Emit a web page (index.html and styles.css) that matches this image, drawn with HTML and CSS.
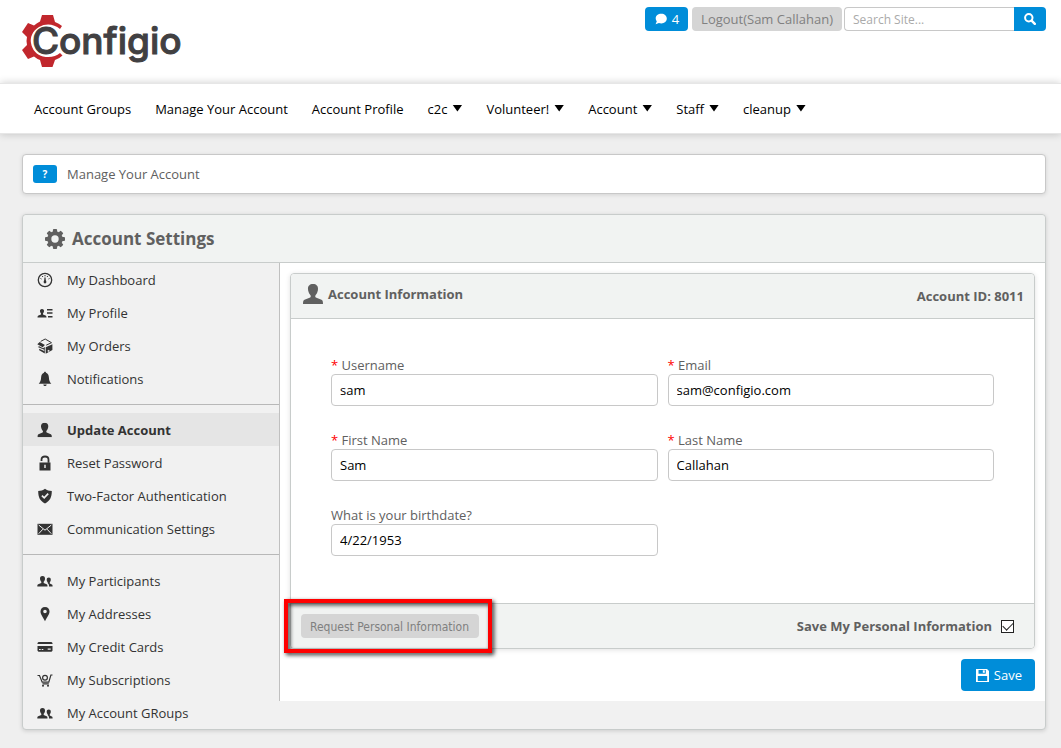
FILE: index.html
```html
<!DOCTYPE html>
<html lang="en">
<head>
<meta charset="utf-8">
<title>Configio - Manage Your Account</title>
<link rel="stylesheet" href="styles.css">
</head>
<body>
<svg class="sprite" aria-hidden="true">
  <symbol id="i-person" viewBox="0 0 20 20"><path d="M10 0C6.700 0 4.800 2 5 5c0 1 .2 2 .6 3 .5 1.700 1.400 2.700 2 3.500.3.800.2 1.500-.4 2L1.500 15.800C.4 16.300 0 17.500 0 20h20c0-2.500-.4-3.700-1.500-4.200L12.800 13.500c-.6-.5-.7-1.200-.4-2 .6-.8 1.500-1.800 2-3.500.4-1 .6-2 .6-3 .2-3-1.700-5-5-5z"/></symbol>
  <symbol id="i-people" viewBox="0 0 16 16"><path d="M5.500 3C3.600 3 2.900 4.200 3 5.700c.1 1.500.8 2.300 1.300 3v1.200L1.200 11.300C.5 11.600.3 12.200.3 13.500h10.200c0-1.300-.1-1.900-.9-2.200L6.700 9.900V8.700C7.300 8 8 7.200 8 5.700 8.100 4.200 7.400 3 5.500 3z"/><path d="M11.800 4.500c-1.300 0-2.100.8-2.100 2.200 0 1.200.5 1.900 1 2.500v.9l.3.400c.8.400 1 1.300 1 3h3.600c0-1.100-.1-1.600-.7-1.900l-2.100-1.100V9.200c.5-.6 1-1.300 1-2.500 0-1.400-.7-2.200-2-2.200z"/></symbol>
</svg>

<header class="top">
  <a class="logo" href="#" aria-label="Configio">
    <svg width="166" height="58" viewBox="20 12 166 58">
      <path fill="#c1272d" d="M42 15h11l2 7q4 1.500 7 4l-2 3C54 24 46 23 39 27 32 31 30 38 31 43c1 7 6 12 12 13.500 7 1.500 13 0 17-3.500l2.500 2.500q-3 3-7.500 4.500l-2.500 7H42l-2-7q-3-1-6-3.500l-6 2.500-6-9 5-5q-1-4 0-8l-5-5 6-9 6 2.500q3-2.500 6-4z"/>
      <text x="32" y="54" class="logo-text">C</text>
      <text x="59" y="54" class="logo-text">onfigio</text>
    </svg>
  </a>
  <div class="tools">
    <button class="btn blue chat" type="button">
      <svg width="12" height="12" viewBox="0 0 12 12" fill="#fff"><path d="M6.300.8C3 .8.700 2.800.700 5.400c0 1.200.4 2.100 1.100 2.900L.6 11.200l3.300-1.100c.7.200 1.500.3 2.400.3 3.200 0 5.500-2.100 5.500-4.800S9.500.8 6.300.8z"/></svg>4</button>
    <button class="btn grey" type="button">Logout(Sam Callahan)</button>
    <form class="search">
      <input type="text" aria-label="Search site" placeholder="Search Site...">
      <button class="blue" type="button" aria-label="Search">
        <svg width="12" height="12" viewBox="0 0 12 12" fill="none" stroke="#fff"><circle cx="4.800" cy="4.800" r="3.700" stroke-width="2"/><path d="M7.600 7.600l3.200 3.200" stroke-width="2.400" stroke-linecap="round"/></svg>
      </button>
    </form>
  </div>
</header>

<nav class="nav">
  <a href="#">Account Groups</a>
  <a href="#">Manage Your Account</a>
  <a href="#">Account Profile</a>
  <a href="#" class="drop">c2c</a>
  <a href="#" class="drop">Volunteer!</a>
  <a href="#" class="drop">Account</a>
  <a href="#" class="drop">Staff</a>
  <a href="#" class="drop">cleanup</a>
</nav>

<div class="page">
  <div class="crumb"><button class="help blue" type="button">?</button><span>Manage Your Account</span></div>

  <section class="panel">
    <h1 class="panel-head">
      <svg width="20" height="20" viewBox="0 0 20 20"><g fill="#606060"><circle cx="10" cy="10" r="7.800"/><g id="t"><rect x="7.900" y="0" width="4.200" height="20" rx="1"/><rect x="0" y="7.900" width="20" height="4.200" rx="1"/></g><use href="#t" transform="rotate(45 10 10)"/></g><circle cx="10" cy="10" r="3.700" fill="#f1f3f2"/></svg>
      Account Settings</h1>
    <div class="panel-body">
      <aside class="side">
        <div class="group">
          <a href="#"><svg viewBox="0 0 16 16"><circle cx="8" cy="8" r="6.700" fill="none" stroke="#333" stroke-width="1.300"/><path d="M3.500 6.500l1 .5M5.300 4l.6 1M8 3v1.300M10.700 4l-.6 1M12.500 6.500l-1 .5" stroke="#333"/><path d="M8 5.500L7.500 9h1z" stroke="#333" stroke-width=".7"/><circle cx="8" cy="10" r="1.400"/></svg>My Dashboard</a>
          <a href="#"><svg viewBox="0 0 16 16"><path d="M5 4C3.400 4 2.900 5 3 6.200c.1 1.100.6 1.700 1 2.200v1L1.500 10.500C.8 10.800.5 11.400.5 12.500h9c0-1.100-.3-1.700-1-2L6 9.400v-1c.4-.5.9-1.100 1-2.200C7.100 5 6.600 4 5 4z"/><path d="M10 4h5.500v1.500H10zM10 7.300h5.500v1.500H10zM11 11h4.500v1.500H11z"/></svg>My Profile</a>
          <a href="#"><svg viewBox="0 0 16 16"><path d="M.3 6.200l2.400-2.100 5.200 3-2.200 2.200zM.8 8.900l1.400-.6 3.800 2 1.800-1.300v6.500L2.200 12.300v-1.500l5 2.200v-1.200z"/><path d="M8.700 9.200l6.700-3v5.900l-6.700 3.600z"/><path d="M3.700 3.400L8.200 1l6.300 3.700-5.300 2.500" fill="none" stroke="#333"/><path d="M10.700 13.300l1.600-.9" stroke="#eee" stroke-width="1.500"/></svg>My Orders</a>
          <a href="#"><svg viewBox="0 0 16 16"><path d="M8 .7c-.7 0-1 .4-1 1.100C5 2.400 4.300 4 4.100 6.500 4 9.300 3.300 11 1.700 12.700h12.600C12.700 11 12 9.300 11.900 6.500 11.700 4 11 2.400 9 1.800 9 1.100 8.700.7 8 .7zM6.300 13.600h3.400c-.2 1-.8 1.500-1.700 1.500s-1.500-.5-1.700-1.500z"/></svg>Notifications</a>
        </div>
        <div class="group">
          <a href="#" class="active"><svg viewBox="0 -1 21 22"><use href="#i-person" width="20" height="20"/></svg>Update Account</a>
          <a href="#"><svg viewBox="0 0 16 16"><path fill-rule="evenodd" d="M2.500 7.500h11v8h-11zM7.300 9.700v3.200h1.400V9.700z"/><path d="M4.500 6V4.700C4.500 2.500 5.800 1.500 8 1.500s3.500 1 3.500 3.200v3" fill="none" stroke="#333" stroke-width="1.800"/></svg>Reset Password</a>
          <a href="#"><svg viewBox="0 0 16 16"><path d="M8 .8C6 2.300 4 2.900 1.200 3c0 6.300 1.800 9.900 6.800 12.500 5-2.600 6.800-6.200 6.800-12.500C12 2.900 10 2.300 8 .8z"/><path d="M4.900 7.700l2.300 2.200 4-4.200" fill="none" stroke="#f1f1f1" stroke-width="1.700"/></svg>Two-Factor Authentication</a>
          <a href="#"><svg viewBox="0 0 16 16"><path d="M.5 2.800h15v11H.5z"/><path d="M1.700 4L8 9.200 14.300 4M1.700 12.700l4.200-4.500M14.300 12.700l-4.200-4.500" fill="none" stroke="#f1f1f1"/></svg>Communication Settings</a>
        </div>
        <div class="group">
          <a href="#"><svg viewBox="0 0 16 16"><use href="#i-people" width="16" height="16"/></svg>My Participants</a>
          <a href="#"><svg viewBox="0 0 16 16"><path fill-rule="evenodd" d="M8 1C5.200 1 3.500 2.900 3.500 5.500 3.500 8 5.500 10.500 8 15.300c2.500-4.800 4.500-7.300 4.500-9.800C12.500 2.900 10.800 1 8 1zM8 3.700a1.800 1.800 0 1 1 0 3.600 1.800 1.800 0 0 1 0-3.600z"/></svg>My Addresses</a>
          <a href="#"><svg viewBox="0 0 16 16"><path fill-rule="evenodd" d="M1.500 3h13l1 1v1H.5V4zM.5 7h15v4.800l-1 1h-13l-1-1zM2 10v1h1.700v-1zm2.700 0v1h1.600v-1zm6-.5v1.300h3V9.500z"/></svg>My Credit Cards</a>
          <a href="#"><svg viewBox="0 0 16 16"><g fill="none" stroke="#333" stroke-width="1.200"><path d="M.5 3.500h2l2.700 6.700h6.600L13.900 3h1.600M5.500 11.900h6.300"/><circle cx="8" cy="5.700" r="2.400"/></g><circle cx="6" cy="13.700" r="1"/><circle cx="11" cy="13.700" r="1"/></svg>My Subscriptions</a>
          <a href="#"><svg viewBox="0 0 16 16"><use href="#i-people" width="16" height="16"/></svg>My Account GRoups</a>
        </div>
      </aside>

      <main class="main">
        <form>
          <div class="card">
            <div class="card-head">
              <h2><svg width="20" height="20" viewBox="0 0 20 20" fill="#606060"><use href="#i-person" width="20" height="20"/></svg>Account Information</h2>
              <strong>Account ID: 8011</strong>
            </div>
            <div class="fields">
              <div><label for="user"><i>*</i> Username</label><input id="user" type="text" value="sam"></div>
              <div><label for="mail"><i>*</i> Email</label><input id="mail" type="text" value="sam@configio.com"></div>
              <div><label for="first"><i>*</i> First Name</label><input id="first" type="text" value="Sam"></div>
              <div><label for="last"><i>*</i> Last Name</label><input id="last" type="text" value="Callahan"></div>
              <div><label for="birth">What is your birthdate?</label><input id="birth" type="text" value="4/22/1953"></div>
            </div>
            <div class="card-foot">
              <div class="request"><button class="btn grey" type="button">Request Personal Information</button></div>
              <label class="keep">Save My Personal Information <input type="checkbox" checked></label>
            </div>
          </div>
          <div class="actions">
            <button class="save blue" type="button"><svg width="13" height="13" viewBox="0 0 13 13"><path fill="#fff" fill-rule="evenodd" d="M0 0h11l2 2v11H0zM2.500 1v3.800h7.300V1zM1.800 7v5h9.400V7z"/><path fill="#fff" d="M6.800 1.300h2v2.500h-2z"/></svg>Save</button>
          </div>
        </form>
      </main>
    </div>
  </section>
</div>
</body>
</html>
```

FILE: styles.css
```css
* { box-sizing: border-box; }
body {
  margin: 0;
  background: #efefef;
  color: #606060;
  font: 13px/18px "Open Sans", "Noto Sans", sans-serif;
}
a { color: inherit; text-decoration: none; }
button, input { font: inherit; }
button { border: 0; cursor: pointer; }
h1, h2 { margin: 0; }
svg { flex: none; }
.sprite { display: none; }
.blue { background: #008dd9; color: #fff; }
.grey { background: #d5d5d5; color: #808080; }

.top {
  display: flex;
  justify-content: space-between;
  align-items: flex-start;
  height: 83px;
  padding: 7px 15px 0 20px;
  background: #fff;
}
.logo { margin-top: 5px; }
.logo svg { display: block; }
.logo-text {
  font: 500 37px Inter, sans-serif;
  fill: #414042;
  stroke: #414042;
  stroke-width: 1px;
}
.tools { display: flex; gap: 4px; }
.btn {
  display: flex;
  align-items: center;
  height: 24px;
  padding: 0 9px;
  border-radius: 4px;
}
.chat { gap: 5px; padding: 0 9px 0 10px; }
.search { display: flex; margin-left: -2px; }
.search input {
  width: 170px;
  height: 24px;
  padding: 0 8px;
  border: 1px solid #c8c8c8;
  border-right: 0;
  border-radius: 4px 0 0 4px;
  font-size: 12px;
}
.search input::placeholder { color: #aaa; }
.search button {
  display: grid;
  place-items: center;
  width: 32px;
  padding: 0;
  border-radius: 0 4px 4px 0;
}

.nav {
  position: relative;
  display: flex;
  align-items: center;
  gap: 24px;
  height: 51px;
  padding: 0 34px;
  border: 1px solid #e6e6e6;
  border-width: 1px 0;
  background: #fff;
  color: #000;
  box-shadow: 0 0 8px rgba(0, 0, 0, 0.2);
}
.drop { display: flex; gap: 5px; }
.drop::after {
  content: "";
  margin-top: 5px;
  width: 10px;
  height: 7px;
  background: #000;
  clip-path: polygon(0 0, 100% 0, 50% 100%);
}

.page { padding: 20px 15px 18px 22px; }
.crumb {
  display: flex;
  align-items: center;
  gap: 10px;
  height: 40px;
  padding: 0 10px;
  border: 1px solid #c8c8c8;
  border-radius: 4px;
  background: #fff;
  box-shadow: 0 1px 4px rgba(0, 0, 0, 0.12);
}
.help {
  width: 24px;
  height: 18px;
  padding: 0;
  border-radius: 3px;
  font-size: 10px;
  font-weight: 700;
}

.panel {
  margin-top: 20px;
  border: 1px solid #c8cccb;
  border-radius: 4px;
  background: #f1f1f1;
  box-shadow: 0 1px 4px rgba(0, 0, 0, 0.15);
}
.panel-head {
  display: flex;
  align-items: center;
  gap: 7px;
  height: 48px;
  padding: 0 22px;
  border-bottom: 1px solid #c8cccb;
  border-radius: 4px 4px 0 0;
  background: #f1f3f2;
  font-size: 17px;
  line-height: 24px;
}
.panel-body { display: flex; align-items: flex-start; }
.side { flex: 0 0 256px; color: #333; }
.group { padding: 8px 0 9px; border-bottom: 1px solid #b8b8b8; }
.group:first-child { padding-top: 0; }
.group:last-child { padding: 9px 0 0; border: 0; }
.group a {
  display: flex;
  align-items: center;
  gap: 14px;
  height: 33px;
  padding-left: 14px;
}
.group svg { width: 16px; height: 16px; fill: #333; }
.group .active { background: #e5e5e5; font-weight: 700; }

.main {
  flex: 1;
  min-width: 0;
  padding: 10px;
  border-left: 1px solid #c0c0c0;
  background: #fff;
}
.card {
  border: 1px solid #c8cccb;
  border-radius: 4px;
  box-shadow: 0 1px 5px rgba(0, 0, 0, 0.12);
}
.card-head, .card-foot {
  display: flex;
  align-items: center;
  justify-content: space-between;
  height: 45px;
  padding: 0 10px;
  background: #f1f3f2;
}
.card-head { border-bottom: 1px solid #c8cccb; border-radius: 4px 4px 0 0; }
.card-head h2 {
  display: flex;
  align-items: center;
  gap: 5px;
  padding: 0 0 4px 2px;
  font-size: 13px;
}
.fields {
  display: grid;
  grid-template-columns: 1fr 1fr;
  gap: 25px 10px;
  padding: 37px 40px 47px;
}
.fields label { display: block; }
.fields i { color: #f00; font-style: normal; }
.fields input {
  display: block;
  width: 100%;
  height: 32px;
  padding: 0 8px;
  border: 1px solid #c8c8c8;
  border-radius: 4px;
  color: #000;
}
.card-foot { border-top: 1px solid #c8cccb; border-radius: 0 0 4px 4px; }
.request { position: relative; }
.request button {
  padding: 2px 10px 0 9px;
  font-family: "DejaVu Sans Condensed", "Noto Sans", sans-serif;
  font-size: 12px;
}
.request::after {
  content: "";
  position: absolute;
  inset: -15px -13px -15px -17px;
  border: 4px solid #f00;
  filter: drop-shadow(2px 2px 2px rgba(0, 0, 0, 0.8));
  pointer-events: none;
}
.keep {
  display: flex;
  align-items: center;
  gap: 9px;
  padding-right: 10px;
  font-weight: 700;
}
.keep input {
  appearance: none;
  width: 13px;
  height: 13px;
  margin: 0;
  border: 1px solid #222;
  background: #fff;
}
.keep input:checked::before {
  content: "";
  display: block;
  width: 9px;
  height: 5px;
  margin: 1px;
  border: solid #222;
  border-width: 0 0 1px 1px;
  transform: rotate(-45deg);
}
.actions { display: flex; justify-content: flex-end; margin-top: 10px; }
.save {
  display: flex;
  align-items: center;
  gap: 5px;
  height: 32px;
  padding: 0 13px 0 15px;
  border-radius: 4px;
}
```
